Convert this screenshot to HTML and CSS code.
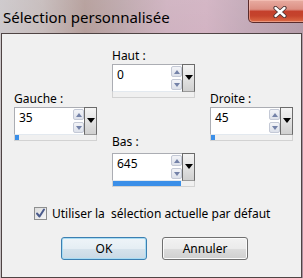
FILE: index.html
```html
<!DOCTYPE html>
<html lang="fr">
<head>
<meta charset="utf-8">
<title>Sélection personnalisée</title>
<link rel="stylesheet" href="styles.css">
</head>
<body>
<div class="window">
  <div class="titlebar">
    <div class="title">Sélection personnalisée</div>
    <div class="close">
      <svg class="close-x" width="14" height="12" viewBox="0 0 14 12">
        <path d="M2.5 2 L11.5 10 M11.5 2 L2.5 10" stroke="#4a3535" stroke-width="4.2" stroke-linecap="round" fill="none"/>
        <path d="M2.5 2 L11.5 10 M11.5 2 L2.5 10" stroke="#ffffff" stroke-width="2.4" stroke-linecap="round" fill="none"/>
      </svg>
    </div>
  </div>
  <div class="client">
    <div class="fields">
      <div class="col col-side">
        <div class="group">
          <div class="lbl">Gauche :</div>
          <div class="spin">
            <div class="field"><span class="val">35</span><span class="arrows"><span class="arr"><svg width="6" height="4" viewBox="0 0 6 4"><path d="M0 4 L3 0 L6 4 Z" fill="#7482a8"/></svg></span><span class="arr"><svg width="6" height="4" viewBox="0 0 6 4"><path d="M0 0 L3 4 L6 0 Z" fill="#7482a8"/></svg></span></span></div>
            <div class="drop"><svg width="8" height="5" viewBox="0 0 8 5"><path d="M0 0 L8 0 L4 5 Z" fill="#000"/></svg></div>
            <div class="track"><div class="fill" style="width:4px"></div></div>
          </div>
        </div>
      </div>
      <div class="col col-mid">
        <div class="group">
          <div class="lbl">Haut :</div>
          <div class="spin">
            <div class="field"><span class="val">0</span><span class="arrows"><span class="arr"><svg width="6" height="4" viewBox="0 0 6 4"><path d="M0 4 L3 0 L6 4 Z" fill="#7482a8"/></svg></span><span class="arr"><svg width="6" height="4" viewBox="0 0 6 4"><path d="M0 0 L3 4 L6 0 Z" fill="#7482a8"/></svg></span></span></div>
            <div class="drop"><svg width="8" height="5" viewBox="0 0 8 5"><path d="M0 0 L8 0 L4 5 Z" fill="#000"/></svg></div>
            <div class="track"><div class="fill" style="width:0px"></div></div>
          </div>
        </div>
        <div class="group group-bas">
          <div class="lbl">Bas :</div>
          <div class="spin">
            <div class="field"><span class="val">645</span><span class="arrows"><span class="arr"><svg width="6" height="4" viewBox="0 0 6 4"><path d="M0 4 L3 0 L6 4 Z" fill="#7482a8"/></svg></span><span class="arr"><svg width="6" height="4" viewBox="0 0 6 4"><path d="M0 0 L3 4 L6 0 Z" fill="#7482a8"/></svg></span></span></div>
            <div class="drop"><svg width="8" height="5" viewBox="0 0 8 5"><path d="M0 0 L8 0 L4 5 Z" fill="#000"/></svg></div>
            <div class="track"><div class="fill" style="width:68px"></div></div>
          </div>
        </div>
      </div>
      <div class="col col-side">
        <div class="group">
          <div class="lbl">Droite :</div>
          <div class="spin">
            <div class="field"><span class="val">45</span><span class="arrows"><span class="arr"><svg width="6" height="4" viewBox="0 0 6 4"><path d="M0 4 L3 0 L6 4 Z" fill="#7482a8"/></svg></span><span class="arr"><svg width="6" height="4" viewBox="0 0 6 4"><path d="M0 0 L3 4 L6 0 Z" fill="#7482a8"/></svg></span></span></div>
            <div class="drop"><svg width="8" height="5" viewBox="0 0 8 5"><path d="M0 0 L8 0 L4 5 Z" fill="#000"/></svg></div>
            <div class="track"><div class="fill" style="width:4px"></div></div>
          </div>
        </div>
      </div>
    </div>
    <label class="check">
      <span class="box"><svg width="11" height="11" viewBox="0 0 11 11"><path d="M2 5.5 L4.5 8.5 L9 1.5" stroke="#4b5b8c" stroke-width="2" fill="none" stroke-linecap="round" stroke-linejoin="round"/></svg></span>
      <span class="check-text">Utiliser la&nbsp; sélection actuelle par défaut</span>
    </label>
    <div class="buttons">
      <button class="btn btn-default">OK</button>
      <button class="btn">Annuler</button>
    </div>
  </div>
</div>
</body>
</html>
```

FILE: styles.css
```css
html, body {
  margin: 0;
  padding: 0;
}

body {
  font-family: "Noto Sans", "Open Sans", sans-serif;
  color: #000;
  background: #c6b4bc;
}

.window {
  width: 303px;
  height: 278px;
  display: flex;
  flex-direction: column;
  overflow: hidden;
  background:
    linear-gradient(180deg, rgba(255,255,255,0.18) 0%, rgba(255,255,255,0) 60%),
    linear-gradient(90deg, #c5c0c3 0%, #bdb1b1 14%, #a98f8b 28%, #b39a9f 40%, #c7a6b6 55%, #cba7b9 68%, #bb9dae 80%, #a88c9b 100%);
}

.titlebar {
  height: 33px;
  flex: none;
  display: flex;
  align-items: flex-start;
}

.title {
  font-size: 15px;
  line-height: 20px;
  padding: 7px 0 0 3px;
  white-space: nowrap;
}

.close {
  margin-left: auto;
  margin-right: -8px;
  width: 63px;
  height: 23px;
  box-sizing: border-box;
  border: 1px solid #5a2b2b;
  border-top: none;
  border-radius: 0 0 4px 5px;
  background: linear-gradient(180deg, #e8aca2 0%, #dc8f83 42%, #c4402c 52%, #c5432c 72%, #dd6b46 100%);
  box-shadow: inset 0 0 0 1px rgba(255, 210, 200, 0.45);
  display: flex;
  padding: 6px 0 0 24px;
}

.close-x {
  display: block;
}

.client {
  flex: 1;
  margin: 0 1px;
  border: 1px solid #4f4444;
  background: #f0f0f0;
}

.fields {
  display: flex;
  gap: 15px;
  padding-left: 12px;
}

.col {
  display: flex;
  flex-direction: column;
  width: 83px;
}

.col-side {
  padding-top: 57px;
}

.col-mid {
  padding-top: 14px;
}

.group-bas {
  margin-top: 36px;
}

.lbl {
  font-size: 12px;
  line-height: 15px;
  margin-bottom: 1px;
  white-space: nowrap;
}

.group-bas .lbl {
  margin-bottom: 4px;
}

.spin {
  display: grid;
  grid-template-columns: 70px 13px;
  grid-template-rows: 28px 6px;
  width: 83px;
}

.field {
  box-sizing: border-box;
  background: #fff;
  border: 1px solid #abadb3;
  border-right: none;
  border-bottom-color: #e3e9ef;
  display: flex;
  justify-content: space-between;
  padding-left: 4px;
}

.val {
  font-size: 12px;
  line-height: 15px;
  padding-top: 2px;
}

.arrows {
  display: flex;
  flex-direction: column;
  gap: 2px;
  padding: 1px 0 0 0;
}

.arr {
  box-sizing: border-box;
  width: 11px;
  height: 11px;
  border: 1px solid #c4c9d6;
  border-radius: 2px;
  background: linear-gradient(180deg, #f3f4f8 0%, #dde1ea 100%);
  display: flex;
  align-items: center;
  justify-content: center;
}

.arr svg {
  display: block;
}

.drop {
  box-sizing: border-box;
  border: 1px solid #6b6b6b;
  border-bottom-color: #9a9a9a;
  background: linear-gradient(180deg, #f4f4f4 0%, #e4e4e4 45%, #d0d0d0 100%);
  display: flex;
  justify-content: center;
  padding-top: 10px;
}

.drop svg {
  display: block;
}

.track {
  grid-column: 1 / 3;
  box-sizing: border-box;
  border: 1px solid #d2d2d2;
  border-top: none;
  background: #f0f0f0;
}

.fill {
  height: 5px;
  background: #3b8fe8;
}

.check {
  display: flex;
  align-items: center;
  gap: 5px;
  margin: 19px 0 0 32px;
  font-size: 12px;
  line-height: 15px;
  white-space: nowrap;
}

.box {
  box-sizing: border-box;
  width: 13px;
  height: 13px;
  border: 1px solid #8e8f8f;
  background: linear-gradient(135deg, #dcdcdc 0%, #f6f6f6 100%);
  display: flex;
  align-items: center;
  justify-content: center;
}

.box svg {
  display: block;
}

.buttons {
  display: flex;
  gap: 15px;
  margin: 16px 0 0 59px;
}

.btn {
  width: 86px;
  height: 23px;
  box-sizing: border-box;
  padding: 0;
  font-family: "Noto Sans", "Open Sans", sans-serif;
  font-size: 12px;
  color: #000;
  border: 1px solid #707070;
  border-radius: 3px;
  background: linear-gradient(180deg, #f2f2f2 0%, #ebebeb 50%, #dddddd 51%, #cfcfcf 100%);
  box-shadow: inset 0 0 0 1px #fbfbfb;
}

.btn-default {
  border-color: #3c7fb1;
  background: linear-gradient(180deg, #eef4f8 0%, #e5eef4 50%, #d6e3ec 51%, #c9d9e5 100%);
  box-shadow: inset 0 0 0 1px #a8dcf3;
}
```
